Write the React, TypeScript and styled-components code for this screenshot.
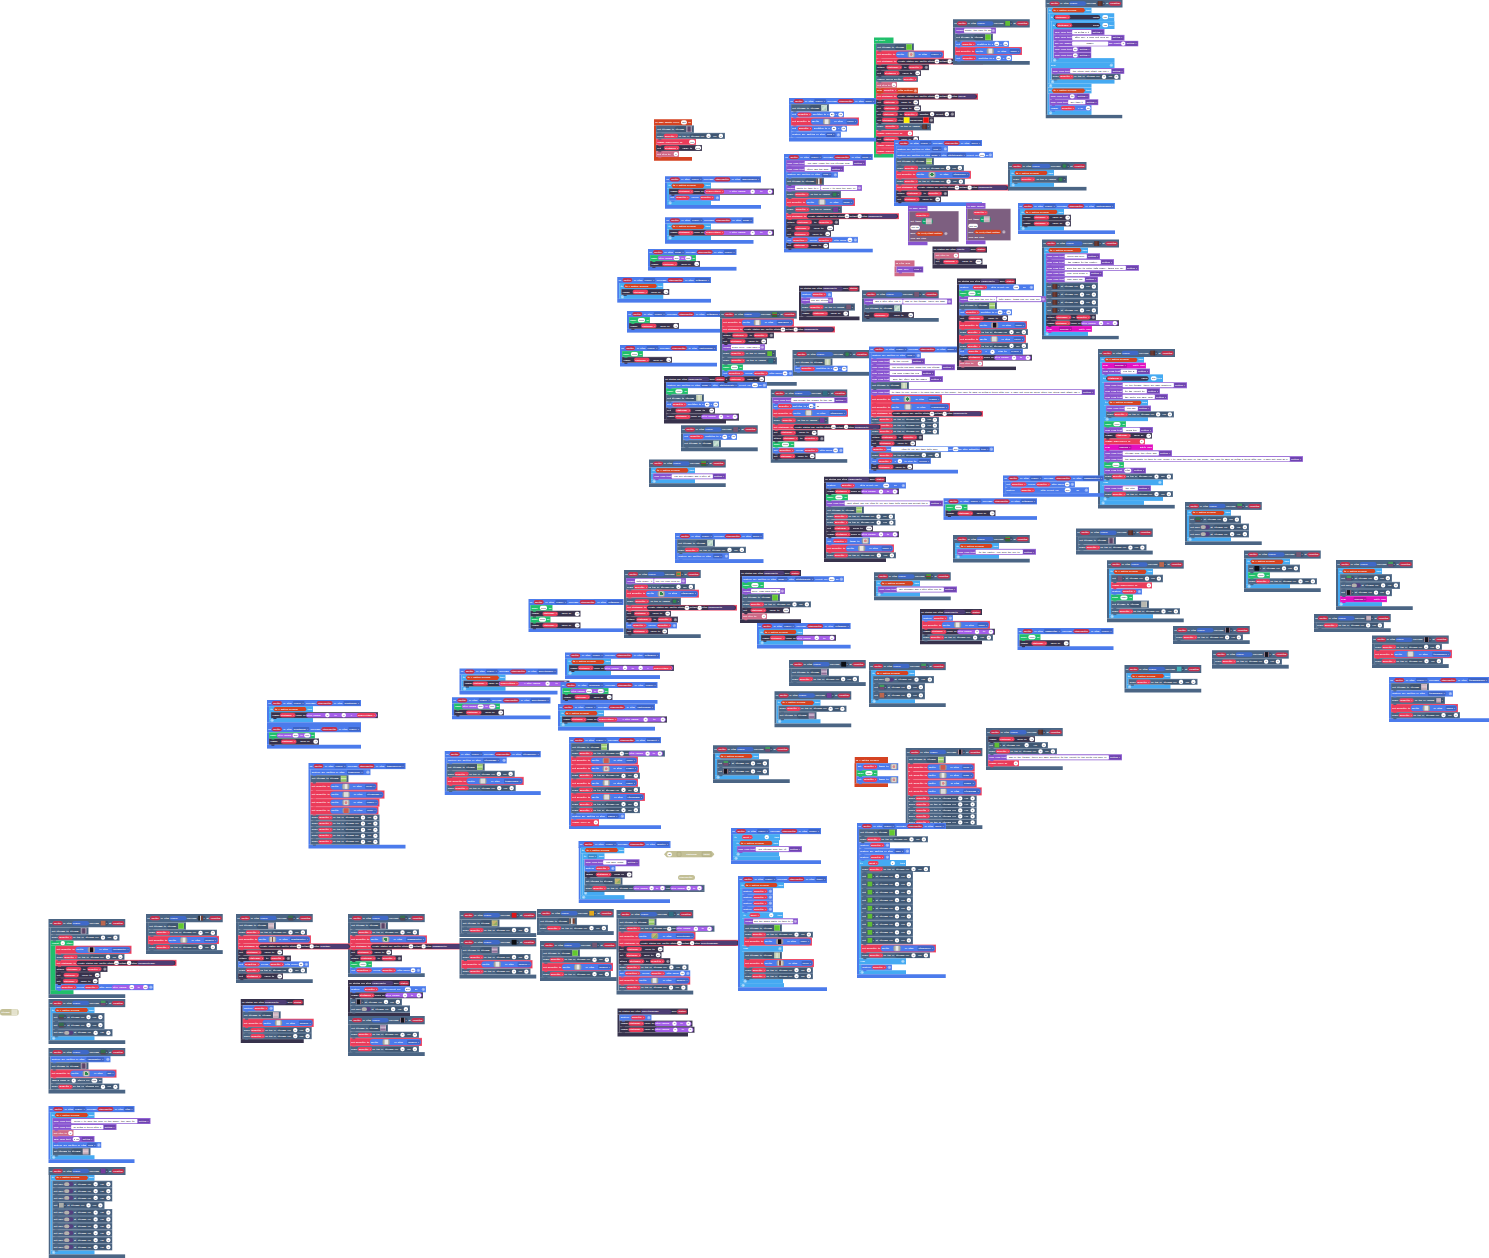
import React from 'react';
import styled, { createGlobalStyle, css } from 'styled-components';

/* The workspace is laid out at its natural block size and shown zoomed out. */
const ZOOM = 0.125;
const U = 1 / ZOOM;

type Hue = 'b' | 's' | 'k' | 'p' | 'm' | 'r' | 'g' | 'l' | 'o' | 'i' | 'x' | 't' | 'q' | 'S' | 'K' | 'B' | 'e';

const hues: Record<Hue, string> = {
  b: '#4b7bec', s: '#4b6584', k: '#37324c', p: '#8854d0', m: '#a55eea', r: '#eb3b5a',
  g: '#20bf6b', l: '#45aaf2', o: '#d54322', i: '#cf6a87', x: '#e30fc0', t: '#c3c097',
  q: '#4d3d74', S: '#3f5672', K: '#37304a', B: '#3f69c8', e: '#12a06e',
};

const pictures: Record<string, string> = {
  grass: '#63c92f',
  field: 'linear-gradient(#9fce6a 40%, #dff0c8 40% 65%, #8cc45c 65%)',
  pale: 'linear-gradient(90deg,#b9c9a4,#dfe6d2 50%,#b4c79c)',
  mint: 'linear-gradient(135deg,#8fc7b0,#d6e6dc 50%,#7fb79c)',
  cave: 'linear-gradient(90deg,#8f7e98 15%,#5c4468 15% 85%,#8f7e98 85%)',
  mauve: 'linear-gradient(#9d7fa5 30%,#c9b3cc 30% 60%,#8d6d96 60%)',
  rose: 'linear-gradient(#c9a9b8,#dcc8d0 50%,#b99aa9)',
  shop: 'linear-gradient(90deg,#222 30%,#ddd 30% 55%,#7a3b2d 55%)',
  sand: 'linear-gradient(135deg,#c9b46e 50%,#8fae61 50%)',
  hero: 'linear-gradient(90deg,#d8cfc8 30%,#7b4b3f 30% 65%,#d8cfc8 65%)',
  ghost: '#dcdcda',
  white: 'linear-gradient(90deg,#c4c4bf 25%,#e9e9e6 25% 80%,#c4c4bf 80%)',
  red: '#d15a4f',
  bush: 'radial-gradient(circle,#2d8a4b 45%,#c7ccc5 50%)',
  shrub: 'radial-gradient(circle,#2d8a4b 40%,#3c5a63 60%)',
  pale2: 'radial-gradient(circle,#d88 30%,#d9d4d1 50%)',
  brown: 'linear-gradient(90deg,#5b2b22,#7a3a2b 40%,#4b241e)',
  dark: 'linear-gradient(90deg,#b58d98 20%,#120d14 20% 75%,#8f6a75 75%)',
  black: '#060608',
  orange: '#c9684a',
  fire: '#f20d0d',
  sun: '#f5b312',
  yellow: '#fff200',
  teal: '#46bfc4',
  tree: 'linear-gradient(#35704a 60%,#5a4650 60%)',
  flower: 'linear-gradient(#43a35c 45%,#7b4b73 45%)',
  violet: '#7a3aa0',
  night: '#2d7285',
  plum: '#7d5873',
  crate: 'linear-gradient(#4f9d35 35%,#a33b2b 35% 60%,#356a2b 60%)',
  ring: 'radial-gradient(circle,#5aa83a 40%,#d8793a 45%)',
  rock: '#b8b8b0',
};

interface RowDef { kind: 'row'; hue: Hue; w: number; h: number; text: string; }
interface LoopDef { kind: 'loop'; hue: Hue; arm: number; head: RowDef; kids: Item[]; other?: Item[]; end: number; }
type Item = RowDef | LoopDef;

const GlobalStyle = createGlobalStyle`
  html, body { margin: 0; background: #fff; }
`;

const Page = styled.main`
  position: relative;
  width: 1489px;
  height: 1258px;
  overflow: hidden;
  background: #fff;
`;

const Workspace = styled.div`
  position: relative;
  width: ${1489 * U}px;
  height: ${1258 * U}px;
  transform: scale(${ZOOM});
  transform-origin: 0 0;
  font: 700 16px/22px 'DejaVu Sans Mono', 'Liberation Mono', monospace;
  color: #fff;
  white-space: nowrap;
`;

const Script = styled.section<{ $x: number; $y: number; $h: number }>`
  position: absolute;
  left: ${p => p.$x * U}px;
  top: ${p => p.$y * U}px;
  height: ${p => p.$h * U}px;
  display: flex;
  flex-direction: column;
  align-items: flex-start;
`;

const Loop = styled.div<{ $grow: number }>`
  flex: ${p => p.$grow} 1 0;
  min-height: 0;
  display: flex;
  flex-direction: column;
  align-items: flex-start;
`;

const Body = styled.div<{ $grow: number; $hue: Hue; $arm: number }>`
  flex: ${p => p.$grow} 1 0;
  min-height: 0;
  display: flex;
  flex-direction: column;
  align-items: flex-start;
  border-left: ${p => p.$arm * U}px solid ${p => hues[p.$hue]};
`;

const Statement = styled.div<{ $hue: Hue; $w: number; $h: number; $plain?: boolean }>`
  position: relative;
  flex: ${p => p.$h} 1 0;
  min-height: 0;
  width: ${p => p.$w * U}px;
  box-sizing: border-box;
  padding: 0 8px 0 10px;
  display: flex;
  align-items: center;
  justify-content: space-between;
  gap: 4px;
  background: ${p => hues[p.$hue]};
  ${p => !p.$plain && css`
    box-shadow: inset 0 0 0 4px rgba(255, 255, 255, 0.2);
    &::after {
      content: '';
      position: absolute;
      left: 18px;
      bottom: -7px;
      width: 26px;
      height: 9px;
      border-radius: 0 0 5px 5px;
      background: ${hues[p.$hue]};
      z-index: 1;
    }
  `}
`;

const Bar = styled.div<{ $hue: Hue; $w: number; $h: number }>`
  flex: ${p => p.$h} 1 0;
  min-height: 0;
  width: ${p => p.$w * U}px;
  box-sizing: border-box;
  padding: 0 12px;
  display: flex;
  align-items: center;
  justify-content: space-between;
  background: ${p => hues[p.$hue]};
`;

const Word = styled.span`
  flex: none;
`;

const Variable = styled.span<{ $deep?: boolean }>`
  flex: none;
  padding: 6px ${p => (p.$deep ? 11 : 9)}px;
  border-radius: 17px;
  background: ${p => (p.$deep ? '#c2304f' : '#eb3b5a')};
  box-shadow: 0 0 0 2px rgba(255, 255, 255, 0.14);
`;

const Field = styled.span<{ $wide: boolean }>`
  flex: ${p => (p.$wide ? '1 1 auto' : 'none')};
  min-width: 16px;
  padding: 6px 9px;
  border-radius: ${p => (p.$wide ? 6 : 14)}px;
  text-align: center;
  background: #fff;
  color: #4a4760;
`;

const Choice = styled.span`
  flex: none;
  padding: 6px 8px;
  border-radius: 6px;
  background: rgba(20, 20, 60, 0.22);
`;

const Plus = styled.span`
  flex: none;
  width: 26px;
  height: 26px;
  border-radius: 13px;
  text-align: center;
  line-height: 26px;
  background: rgba(255, 255, 255, 0.45);
`;

const Picture = styled.span<{ $fill: string }>`
  flex: none;
  width: 38px;
  height: 38px;
  border: 4px solid rgba(255, 255, 255, 0.35);
  background: ${p => p.$fill};
`;

const TilePill = styled.span`
  flex: none;
  display: flex;
  align-items: center;
  gap: 5px;
  padding: 0 9px;
  border-radius: 20px;
  background: rgba(20, 25, 45, 0.25);
`;

const Tile = styled.span<{ $fill: string }>`
  width: 38px;
  height: 38px;
  background: ${p => p.$fill};
  opacity: 0.9;
`;

const WallSwitch = styled.span`
  flex: none;
  display: flex;
  width: 76px;
  height: 34px;
  border-radius: 17px;
  background: #54407f;

  &::before {
    content: '';
    width: 42px;
    height: 30px;
    margin: 2px;
    border-radius: 15px;
    background: #b3b3ad;
  }
`;

const SpritePill = styled.span`
  flex: none;
  display: flex;
  align-items: center;
  justify-content: center;
  width: 58px;
  height: 46px;
  border-radius: 14px;
  background: #999c9c;
`;

const SpriteArt = styled.span<{ $fill: string }>`
  width: 38px;
  height: 38px;
  background: ${p => p.$fill};
`;

const Reporter = styled.span<{ $hue: Hue }>`
  flex: 1 1 auto;
  display: flex;
  align-items: center;
  justify-content: space-between;
  gap: 4px;
  min-height: 36px;
  padding: 0 8px;
  border-radius: 20px;
  background: ${p => hues[p.$hue]};
  ${p => p.$hue === 'o' && css`
    padding: 0 14px;
    border-radius: 0;
    min-height: 38px;
    clip-path: polygon(14px 0, calc(100% - 14px) 0, 100% 50%, calc(100% - 14px) 100%, 14px 100%, 0 50%);
  `}
  ${p => p.$hue === 'b' && css`
    min-height: 50px;
    border-radius: 25px;
  `}
`;

const Loose = styled.div<{ $x: number; $y: number; $w: number; $h: number; $hex?: boolean }>`
  position: absolute;
  left: ${p => p.$x * U}px;
  top: ${p => p.$y * U}px;
  width: ${p => p.$w * U}px;
  height: ${p => p.$h * U}px;
  box-sizing: border-box;
  padding: 0 ${p => (p.$hex ? 26 : 10)}px;
  display: flex;
  align-items: center;
  justify-content: space-between;
  border-radius: ${p => (p.$hex ? 0 : 20)}px;
  background: #c3c097;
  clip-path: ${p => (p.$hex ? 'polygon(24px 0, calc(100% - 24px) 0, 100% 50%, calc(100% - 24px) 100%, 24px 100%, 0 50%)' : 'none')};
`;

const Outlined = styled.span`
  padding: 4px 10px;
  border: 3px solid #99966f;
  border-radius: 6px;
`;

const Draft = styled.div<{ $w: number }>`
  flex: 30 1 0;
  width: ${p => p.$w * U}px;
  box-sizing: border-box;
  padding: 8px 10px;
  display: flex;
  flex-direction: column;
  justify-content: space-around;
  align-items: flex-start;
  background: #7d5f80;
  box-shadow: inset 0 0 0 4px rgba(255, 255, 255, 0.16);
`;

const DraftLine = styled.div<{ $indent?: number }>`
  display: flex;
  align-items: center;
  gap: 6px;
  padding-left: ${p => p.$indent || 0}px;
`;

/* Inline block notation: @variable !parameter #field ~choice %picture ^tile $sprite &wall + and <hue ... > for a reporter. */
function renderTokens(words: string[], cursor: { i: number }): React.ReactNode[] {
  const out: React.ReactNode[] = [];
  let plain: string[] = [];
  const flush = () => {
    if (plain.length) out.push(<Word key={out.length}>{plain.join(' ')}</Word>);
    plain = [];
  };
  while (cursor.i < words.length) {
    const word = words[cursor.i++];
    const rest = word.slice(1).replace(/_/g, ' ');
    const key = `k${cursor.i}`;
    if (word === '>') break;
    if (word[0] === '<') {
      flush();
      out.push(<Reporter key={key} $hue={word[1] as Hue}>{renderTokens(words, cursor)}</Reporter>);
    } else if ('@!#~%^$&+'.includes(word[0])) {
      flush();
      if (word[0] === '@') out.push(<Variable key={key}>{rest} ▾</Variable>);
      if (word[0] === '!') out.push(<Variable key={key} $deep>{rest}</Variable>);
      if (word[0] === '#') out.push(<Field key={key} $wide={rest.length > 5}>{rest}</Field>);
      if (word[0] === '~') out.push(<Choice key={key}>{rest} ▾</Choice>);
      if (word[0] === '%') out.push(<Picture key={key} $fill={pictures[rest]} />);
      if (word[0] === '^') out.push(<TilePill key={key}><Tile $fill={pictures[rest]} />▾</TilePill>);
      if (word[0] === '$') out.push(<SpritePill key={key}><SpriteArt $fill={pictures[rest]} /></SpritePill>);
      if (word[0] === '&') out.push(<WallSwitch key={key} />);
      if (word[0] === '+') out.push(<Plus key={key}>+</Plus>);
    } else plain.push(word);
  }
  flush();
  return out;
}

function Line({ row, plain }: { row: RowDef; plain?: boolean }) {
  return (
    <Statement $hue={row.hue} $w={row.w} $h={row.h} $plain={plain}>
      {renderTokens(row.text.split(' '), { i: 0 })}
    </Statement>
  );
}

const sum = (items: Item[]): number => items.reduce((n, it) => n + sizeOf(it), 0);
const sizeOf = (it: Item): number =>
  it.kind === 'row' ? it.h : it.head.h + sum(it.kids) + (it.other ? 6 + sum(it.other) : 0) + it.end;

function Items({ list }: { list: Item[] }) {
  return <>{list.map((it, i) => (it.kind === 'row' ? <Line key={i} row={it} /> : <LoopBlock key={i} def={it} />))}</>;
}

function LoopBlock({ def }: { def: LoopDef }) {
  const isIf = def.hue === 'l';
  return (
    <Loop $grow={sizeOf(def)}>
      <Line row={def.head} plain />
      <Body $grow={sum(def.kids)} $hue={def.hue} $arm={def.arm}><Items list={def.kids} /></Body>
      {def.other && (
        <>
          <Bar $hue={def.hue} $w={def.head.w} $h={6}><Word>else</Word><Plus>−</Plus></Bar>
          <Body $grow={sum(def.other)} $hue={def.hue} $arm={def.arm}><Items list={def.other} /></Body>
        </>
      )}
      <Bar $hue={def.hue} $w={def.head.w} $h={def.end}>{isIf && <Plus>+</Plus>}</Bar>
    </Loop>
  );
}

/* ---- block vocabulary ---- */
const row = (hue: Hue, w: number, text: string, h = 5.9): RowDef => ({ kind: 'row', hue, w, h, text });

const story =
  'you have found the old village near the river and the guard wants to talk to you. press A to open the door of the house. ' +
  'the cave is dark so bring a torch with you. I have not seen my horse since the storm last night can you find it for me? ' +
  'take this sword and defeat the dragon in the castle. you need the key to enter this place. thank you for your help brave hero. ' +
  'come back when you are stronger and I will give you the map of the island. there are many monsters in the forest to the north ';
let at = 0;
const speech = (n: number) => {
  const len = Math.max(2, Math.round(n));
  const s = (story + story).slice(at, at + len).trim();
  const next = story.indexOf(' ', at + len);
  at = next < 0 ? 0 : next + 1;
  return s.replace(/ /g, '_');
};

const T = (pic = 'field') => row('s', 38, `set tilemap to <S tilemap %${pic} >`, 7.2);
const P = (w = 69, name = 'mySprite') => row('s', w, `place @${name} on top of <S tilemap col #0 row #0 >`);
const Pt = (pic: string, w = 55) => row('s', w, `place @mySprite on top of random ^${pic}`, 7.2);
const S = (pic: string, kindName: string, w = 68) => row('r', w, `set mySprite to <b sprite $${pic} of kind ~${kindName} >`, 7.9);
const N = (w = 112, kindName = 'EnemyHealth') =>
  row('r', w, `set statusbar to <K create status bar sprite width #20 height #4 kind <q ${kindName} > >`);
const A = (w = 52) => row('k', w, 'attach @statusbar to @mySprite +');
const V = (w = 45, n = '50') => row('k', w, `set @statusbar value to #${n}`);
const D = (w = 50, n = '-1') => row('k', w, `change @statusbar value by #${n}`);
const DR = (w = 73) => row('k', w, 'change @statusbar value by <m pick random #0 to #9 >');
const DX = (w = 105) => row('k', w, 'change @statusbar value by <m @playerAttack × pick random #0 to #9 >');
const DY = (w = 105) => row('k', w, 'change @statusbar value by <m pick random #0 to #9 × @playerAttack >');
const B = (w = 31) => row('b', w, 'destroy @mySprite +');
const BA = (w = 52, k = 'Food') => row('b', w, `destroy all sprites of kind ~${k} +`);
const BE = (w: number) => row('b', w, 'destroy all sprites of kind ~Enemy with ~disintegrate effect for #500 ms +');
const BD = (w: number) => row('b', w, 'destroy @mySprite with effect for #500 ms +');
const F = (w = 71) => row('b', w, 'set @mySprite2 follow @mySprite with speed #30 +');
const Q = (w = 53) => row('b', w, 'set @mySprite position to x #80 y #60');
const G = (w = 22) => row('g', w, 'pause #1000 ms');
const GR = () => row('g', 46, 'pause <m pick random #500 to #900 > ms');
const L = (w: number) => row('p', w, `show long text #${speech((w - 37) / 1.2)} ~bottom`);
const Y = (w: number) => row('p', w, `splash #${speech((w - 15) / 1.2)} +`);
const YY = (w: number) => row('p', w, `splash #${speech((w - 20) / 3.2)} #${speech((w - 20) / 2)} +`);
const W = (pic = 'tree', w = 52, h = 8) => row('s', w, `set ^${pic} at <S tilemap col #0 row #0 >`, h);
const Wall = (w = 60) => row('s', w, 'set wall & at <S tilemap col #0 row #0 >', 7);
const IMG = (w = 42, h = 7) => row('b', w, 'set @mySprite image to $pale2', h);
const X = (w = 46) => row('x', w, 'play ~powerUp until done');
const I = (w = 24) => row('i', w, 'set life to #3');
const R = (w = 40, n = '1') => row('r', w, `change ${w < 34 ? 'score' : 'playerLevel'} by #${n}`);

const loop = (head: RowDef, kids: Item[], other?: Item[], arm = 2, end = 4): LoopDef =>
  ({ kind: 'loop', hue: head.hue, arm, head, kids, other, end });
const If = (kids: Item[], w = 44) => loop(row('l', w, 'if <o is A button pressed > then'), kids);
const IfEq = (w: number, kids: Item[], other?: Item[], h = 8) =>
  loop(row('l', w, 'if <k @statusbar value > = #100 then', h), kids, other);
const IfVar = (w: number, kids: Item[], other?: Item[]) => loop(row('l', w, 'if @quest = #1 then', 6), kids, other);

const H = (w: number, other: string, player = 'Player') =>
  row('b', w, `on !sprite of kind ~${player} overlaps !otherSprite of kind ~${other}`, 6);
const HT = (pic: string, w = 76.7) => row('s', w, `on !sprite of kind <B Player > overlaps ^${pic} at !location`, 8);
const HK = (w: number, k = 'EnemyHealth') => row('k', w, `on status bar kind <q ${k} > zero !status`, 6);

interface ScriptDef { x: number; y: number; h: number; def: LoopDef; }
const at2 = (x: number, y: number, h: number, head: RowDef, kids: Item[]): ScriptDef =>
  ({ x, y, h, def: { kind: 'loop', hue: head.hue, arm: 2, head, kids, end: 3.7 } });

const scripts: ScriptDef[] = [
  at2(654, 119.3, 41.5, row('o', 38, 'on game update every #500 ms', 6), [T('cave'), P(), R(40, '100'), V(46, '100'), I(23)]),
  at2(665, 176.3, 32.5, H(96, 'smallEnemy12'), [If([DX(), row('b', 51, 'set @mySprite follow @mySprite +')])]),
  at2(665, 217.3, 26.5, H(88.5, 'Enemy'), [If([DX()])]),
  at2(648, 249, 21.6, H(88.5, 'Player', 'Enemy'), [GR(), D()]),
  at2(874, 37.5, 120, row('g', 19.5, 'on start', 6), [
    T('grass'), S('pale2', 'Player', 68), N(107, 'Health'), A(53), V(45, 'HP'), row('s', 42, 'camera follow sprite @mySprite'),
    I(21), row('o', 42, 'move @mySprite with buttons +'), N(102, 'Energy'), V(43), V(45, '100'),
    row('k', 79, 'set @statusbar to @mySprite padding #0 offset #0 +'), row('k', 58, 'set @statusbar fill %yellow background %fire +', 6.2),
    Pt('brown'), R(37, '0'), V(43), R(40), R(40),
  ]),
  at2(789, 98, 43.5, H(87, 'house'), [T('mint'), Q(53), S('white', 'Horse', 68), Q(56), BA(50)]),
  at2(784, 154, 98.4, H(88.7, 'horse'), [
    L(80), L(58), BA(52), T('shop'), YY(76), Pt('shrub'), S('ghost', 'Enemy', 69), Pt('violet', 56), N(113), A(53), V(48, '100'), V(45), F(72), V(43),
  ]),
  at2(953, 19.3, 45.5, HT('grass'), [Y(41), T('grass'), Q(54), S('white', 'House', 67), Q(57)]),
  at2(894, 140, 66, H(88, 'door1'), [BA(52), BE(97), T('field'), P(68), S('bush', 'hiddenCave', 75), P(), N(113), A(), V()]),
  at2(1045.5, -0.5, 119, HT('brown'), [
    If([IfEq(65, [IfEq(63, [L(51), L(71), row('p', 85, 'ask for number #number and length #2 ~bottom'), L(38), L(38)])], [L(73), P()])]),
    If([L(40), L(49), row('b', 42, 'change @mySprite y by #10')]),
  ]),
  at2(1008, 162, 28.5, HT('shrub', 78.5), [If([Pt('shrub')])]),
  at2(1018, 203, 31, H(97, 'castleDragon'), [If([D(49), D(49)])]),
  at2(932.5, 246.5, 22, HK(54.5, 'Health'), [I(24.5), V(48, '100')]),
  at2(894.5, 260.3, 16, row('i', 20, 'on life zero', 6), [row('p', 27, 'game over ~LOSE')]),
  at2(1042, 239.5, 100, HT('brown'), [
    If([L(54), L(68), L(93), L(57), L(52), W('brown'), W('brown'), W('brown'), W('brown'), A(50), DR(), X()]),
  ]),
  at2(799, 285.7, 34.5, HK(60.5), [B(), Y(32), Pt('plum', 54), D(48)]),
  at2(862, 290.3, 31.5, HT('plum'), [YY(88), T('mint'), V(50)]),
  at2(792.5, 350, 25.7, HT('shrub'), [T('pale'), Q()]),
  at2(869, 346.5, 127, H(89, 'boss1'), [
    BA(50), L(54), L(84), L(64), L(72), T('pale'), L(224), S('bush', 'Dragon', 71), S('ghost', 'orangeEnemy', 79), N(112),
    P(68), P(68), P(68), A(), V(), row('b', 123, `@mySprite say #${speech(30)} for #500 ms with animation ~true +`), P(70), row('b', 60, 'set @mySprite x #0 to stay in ~screen'), V(42),
  ]),
  at2(770.5, 389.3, 73.5, HT('night'), [L(75), Q(43), S('ghost', 'hiddenCave', 75.5), Pt('violet', 56), N(109), V(), A(), G(), F(), V(43)]),
  at2(957, 278.3, 92, HK(59), [BD(75), G(), YY(87), T('field'), Q(), V(49), S('dark', 'House', 68), P(), S('ghost', 'Horse', 67), P(), row('b', 64, 'set @mySprite x #0 stay in ~screen'), DR(), I()]),
  at2(617.3, 277, 25.6, H(93.7, 'slimeBoss'), [If([D(48)])]),
  at2(627, 311, 21.6, H(95, 'slimeBoss'), [G(21), D()]),
  at2(620, 345, 21.5, H(97, 'castleEnemy'), [G(21), D()]),
  at2(720, 310.7, 75, HT('crate'), [S('white', 'SmallBoss', 72), N(113), A(), V(), Y(43), Pt('grass', 54), Pt('night'), G(21), F(), V(43)]),
  at2(664, 376, 47.5, HK(62), [BE(101), G(), T('pale'), Q(), V(49), DR()]),
  at2(681, 425.3, 26, HT('plum'), [Q(54), T('mint')]),
  at2(649, 459.5, 27.5, HT('crate'), [If([L(73)])]),
  at2(1098, 349, 159.5, HT('brown'), [
    If([X(44), L(48), IfEq(61, [L(83), L(56), L(64), If([L(45), P(68)]), G(), L(49), D(48), R(41), X(49), L(68), L(199), G(20), L(42), P()], [L(47), P()])]),
  ]),
  at2(1003, 475.3, 21.5, H(101, 'swampMonster1'), [F(70), BD(84)]),
  at2(943.5, 498.3, 21.6, H(93.5, 'slimeBoss'), [G(), D()]),
  at2(1185, 502, 43, HT('flower'), [If([W('tree'), Wall(), Wall()])]),
  at2(1076, 528.5, 26, HT('brown'), [T('cave'), P(68.5)]),
  at2(824, 476.5, 85.5, HK(62), [BD(80), DR(), G(), L(117), T('field'), P(), P(69.5), V(47, '100'), DR(), IMG(44), S('white', 'House', 68), P(70)]),
  at2(675, 533, 30, H(88.5, 'door2'), [T('mint'), P(), BA(52)]),
  at2(953, 535, 27.5, HT('crate'), [If([L(79)])]),
  at2(528.5, 599, 33, H(95, 'slimeBoss'), [G(), D(), G(20), D()]),
  at2(624, 570, 68, HT('ring'), [YY(60), P(), S('bush', 'hiddenCave', 73), Pt('shrub'), N(111), V(), A(), row('b', 51, 'set @mySprite follow @mySprite +'), V(42)]),
  at2(740, 570, 53, HK(61), [BE(102), G(), Y(43), T('grass'), P(), V(48, '100'), I(25)]),
  at2(757, 623, 25.5, H(93.6, 'slimeBoss'), [If([DR(75)])]),
  at2(874, 572.3, 28, HT('crate'), [If([L(79)])]),
  at2(920, 609, 35.3, HK(62), [B(), S('white', 'House', 68), DR(), P(71)]),
  at2(1017.5, 628, 22, H(96, 'Player', 'swampSlime'), [G(21), D()]),
  at2(789, 660, 26, HT('black'), [T('mauve'), P(68)]),
  at2(869, 662, 45, HT('flower'), [If([Wall(61), W('flower'), W('orange')])]),
  at2(774.5, 691.3, 36, HT('violet'), [If([P(68), T('mauve')])]),
  at2(1107, 560.3, 62, HT('orange'), [If([W('plum', 52, 7.2), R(41), B(), G(), T('rock'), P()])]),
  at2(1244, 550.5, 41.5, HT('plum'), [If([W('black', 52, 7.5), G(), P()])]),
  at2(1336, 560, 50, HT('flower'), [If([W('flower', 52, 7.5), Wall(), W('dark', 52, 7), X(47)])]),
  at2(1314, 614, 18, HT('rose'), [P(68)]),
  at2(1173, 626, 18, HT('dark'), [P(68)]),
  at2(1212, 650.3, 18.3, HT('dark'), [P(68)]),
  at2(1372, 635.5, 32.5, HT('dark'), [P(68), S('ghost', 'islandGuard', 78), P()]),
  at2(1124.5, 665, 27.5, HT('teal'), [If([P()])]),
  at2(1389, 677, 45, H(100, 'islandGuard12'), [T('rose'), BA(62, 'islandGuard'), Pt('rose', 54), S('white', 'Guard', 67), P()]),
  at2(986, 728, 42, HT('brown'), [D(47), W('grass', 60, 6), P(), L(134), R(31, '1')]),
  at2(459.5, 668.5, 26, H(98, 'desertSnake1'), [If([DX(106)])]),
  at2(565, 652.5, 26.5, H(95, 'slimeBoss'), [If([DY()])]),
  at2(452, 697.3, 22, H(98.5, 'desertSnake1'), [GR(), D()]),
  at2(560.5, 682, 21.7, H(97, 'Player', 'bossEnemy'), [GR(), D()]),
  at2(558, 704, 26.6, H(97, 'castleEnemy'), [If([DX()])]),
  at2(267, 700, 26, H(94, 'plantEnemy'), [If([DY(107)])]),
  at2(267, 726, 22.6, H(94, 'Player', 'plantEnemy'), [GR(), D()]),
  at2(308.5, 763, 85.5, H(97, 'templeDoor12'), [BA(60, 'templeDoor'), T('field'), S('white', 'Horse', 67), S('ghost', 'villageMan', 74), S('pale2', 'Temple', 69), S('red', 'House', 68), P(), P(), P(), P(), P()]),
  at2(444.7, 751, 44, H(96, 'villageDoor'), [BA(60, 'villageMan'), T('field'), P(68), S('ghost', 'templeGuard', 77), P()]),
  at2(569, 737, 92, H(92, 'teleport'), [T('field'), row('s', 94, 'place @mySprite on top of <S tilemap col #0 row <m pick random #0 to #9 > >'), S('red', 'House', 67), S('pale2', 'Temple', 68), P(), S('white', 'House', 67), P(), S('ghost', 'villageMan', 74), P(), P(), BA(54, 'Temple'), R(28)]),
  at2(578.5, 841, 62, H(91.5, 'monster'), [
    If([loop(row('l', 22, 'if ~true then'), [L(55), B(), D(48), T('sand'), row('s', 120, 'place @mySprite on top of <S tilemap col <m pick random #0 to #9 > row <m pick random #0 to #9 > >')])]),
  ]),
  at2(713, 745.3, 37.7, HT('flower'), [If([W('flower'), W('dark')])]),
  at2(854.5, 757, 30, row('o', 33.5, 'on A button pressed', 6), [IMG(), G(21), IMG()]),
  at2(905.7, 748, 81, HT('dark'), [T('field'), S('red', 'Horse', 67), S('white', 'House', 67), S('pale2', 'Temple', 69), S('ghost', 'villageMan', 74), P(), P(), P(), P(), P()]),
  at2(857, 823, 155, H(88.7, 'door3'), [
    T('grass'), P(), B(), BA(51), B(),
    IfVar(47, [P(), ...Array.from({ length: 9 }, () => W('grass')), S('white', 'hiddenDoor', 75), P()], [B()]),
  ]),
  at2(731, 828, 36, H(90, 'keeper'), [IfVar(47, [If([L(65)])])]),
  at2(348, 914, 63, HT('tree'), [T('cave'), P(), S('bush', 'swampMonster', 77), N(121, 'swampMonster'), V(42), A(), G(), F()]),
  at2(348, 980, 36.5, HK(62), [BD(76), DR(), W('dark', 52, 7), Wall()]),
  at2(459.5, 911, 26, HT('fire'), [T('sand'), P()]),
  at2(459.5, 938, 40.5, HT('black'), [T('mauve'), P(), S('white', 'Enemy12', 71), P()]),
  at2(537, 909, 26, HT('sun'), [T('shop'), P()]),
  at2(540, 941, 40, HT('plum'), [T('grass'), P(), S('white', 'Enemy12', 71), P()]),
  at2(616.5, 910, 84.5, HT('night'), [
    T('field'), row('s', 96, 'place @mySprite on top of <S tilemap col #0 row <m pick random #0 to #9 > >'), S('sand', 'desertSnake', 77), N(121, 'desertSnakeBar'), V(), V(43), A(), P(70), F(72), S('white', 'Enemy12', 72), P(),
  ]),
  at2(738, 876, 115, H(89, 'tower'), [
    If([B(), B(), B(), B(), IfVar(41, [Y(54), T('grass'), P(), S('dark', 'Tower', 68)], [T('pale'), S('hero', 'Horse', 70), P(), P()])]),
  ]),
  at2(348, 1016, 40, HT('dark'), [T('mauve'), P(), S('white', 'Enemy12', 72), P()]),
  at2(617.5, 1008.5, 28, HK(70.5, 'desertSnakeBar'), [B(32), DR(), DR(75)]),
  at2(48.5, 919, 79, HT('orange'), [
    T('cave'), P(),
    loop(row('g', 23, 'repeat #4 times', 5), [S('dark', 'caveMonster', 76), P(), N(121, 'caveMonsterBar'), A(), V(), V(43), row('b', 98, 'set @mySprite2 follow @mySprite with speed <m pick random #10 to #50 > +')], undefined, 5, 4),
  ]),
  at2(48.5, 999, 45, HT('flower'), [If([W('tree'), W('tree'), Wall()])]),
  at2(48.5, 1048, 45.5, HT('tree'), [BA(60, 'caveMonster'), T('cave'), S('bush', 'Bat', 66), row('s', 52, 'camera shake by #4 pixels for #500 ms'), P()]),
  at2(146, 914, 40, HT('shop'), [T('grass'), P(), S('white', 'Enemy12', 71), P()]),
  at2(236, 914, 69, HT('tree'), [T('rose'), P(), S('hero', 'plantMonster', 73), N(113, 'plantBar'), V(), A(53), F(), P(), V()]),
  at2(240.7, 999, 44, HK(63), [B(), T('rose'), S('white', 'Enemy12', 71), P(), P()]),
  at2(48.5, 1106, 57, H(86, 'sign'), [If([L(98), L(64), I(21), L(42), BA(49), T('rose')])]),
  at2(48.5, 1167, 91, HT('violet'), [
    If([Wall(), Wall(), Wall(), W('rock', 52, 7.8), Wall(), Wall(), Wall(), Wall(), Wall(), Wall()]),
  ]),
];

function DraftScript({ x, y, h, w }: { x: number; y: number; h: number; w: number }) {
  return (
    <Script $x={x} $y={y} $h={h}>
      <Line row={row('p', 19.5, 'on game update', 5.5)} plain />
      <Body $grow={30} $hue="p" $arm={1.2}>
        <Draft $w={w}>
          <DraftLine $indent={40}><Variable>mySprite ▾</Variable></DraftLine>
          <DraftLine><Word>set image</Word><Reporter $hue="e">to<Picture $fill={pictures.rose} /></Reporter></DraftLine>
          <DraftLine><Field $wide={false}>500 ms</Field></DraftLine>
          <DraftLine><Word>when</Word><Reporter $hue="o">is left/right button</Reporter><Plus>+</Plus></DraftLine>
          <DraftLine><Word>loop and stop</Word></DraftLine>
        </Draft>
      </Body>
      <Bar $hue="p" $w={19.5} $h={3.7} />
    </Script>
  );
}

export default function App() {
  return (
    <Page>
      <GlobalStyle />
      <Workspace>
        {scripts.map(s => (
          <Script key={`${s.x}-${s.y}`} $x={s.x} $y={s.y} $h={s.h}><LoopBlock def={s.def} /></Script>
        ))}
        <DraftScript x={908} y={205.5} h={40} w={49.5} />
        <DraftScript x={966} y={203} h={41.3} w={43.5} />
        <Loose $x={664} $y={851} $w={50.5} $h={6.6} $hex>
          <Field $wide={false}>50</Field><Outlined>=</Outlined><Word>statusbar</Word><Outlined>value</Outlined>
        </Loose>
        <Loose $x={678} $y={875} $w={17} $h={5}><Word>otherSprite</Word></Loose>
        <Loose $x={0} $y={1009} $w={18.6} $h={6.4}><Word>tilemap</Word><Picture $fill="#e4e2cd" /></Loose>
      </Workspace>
    </Page>
  );
}
